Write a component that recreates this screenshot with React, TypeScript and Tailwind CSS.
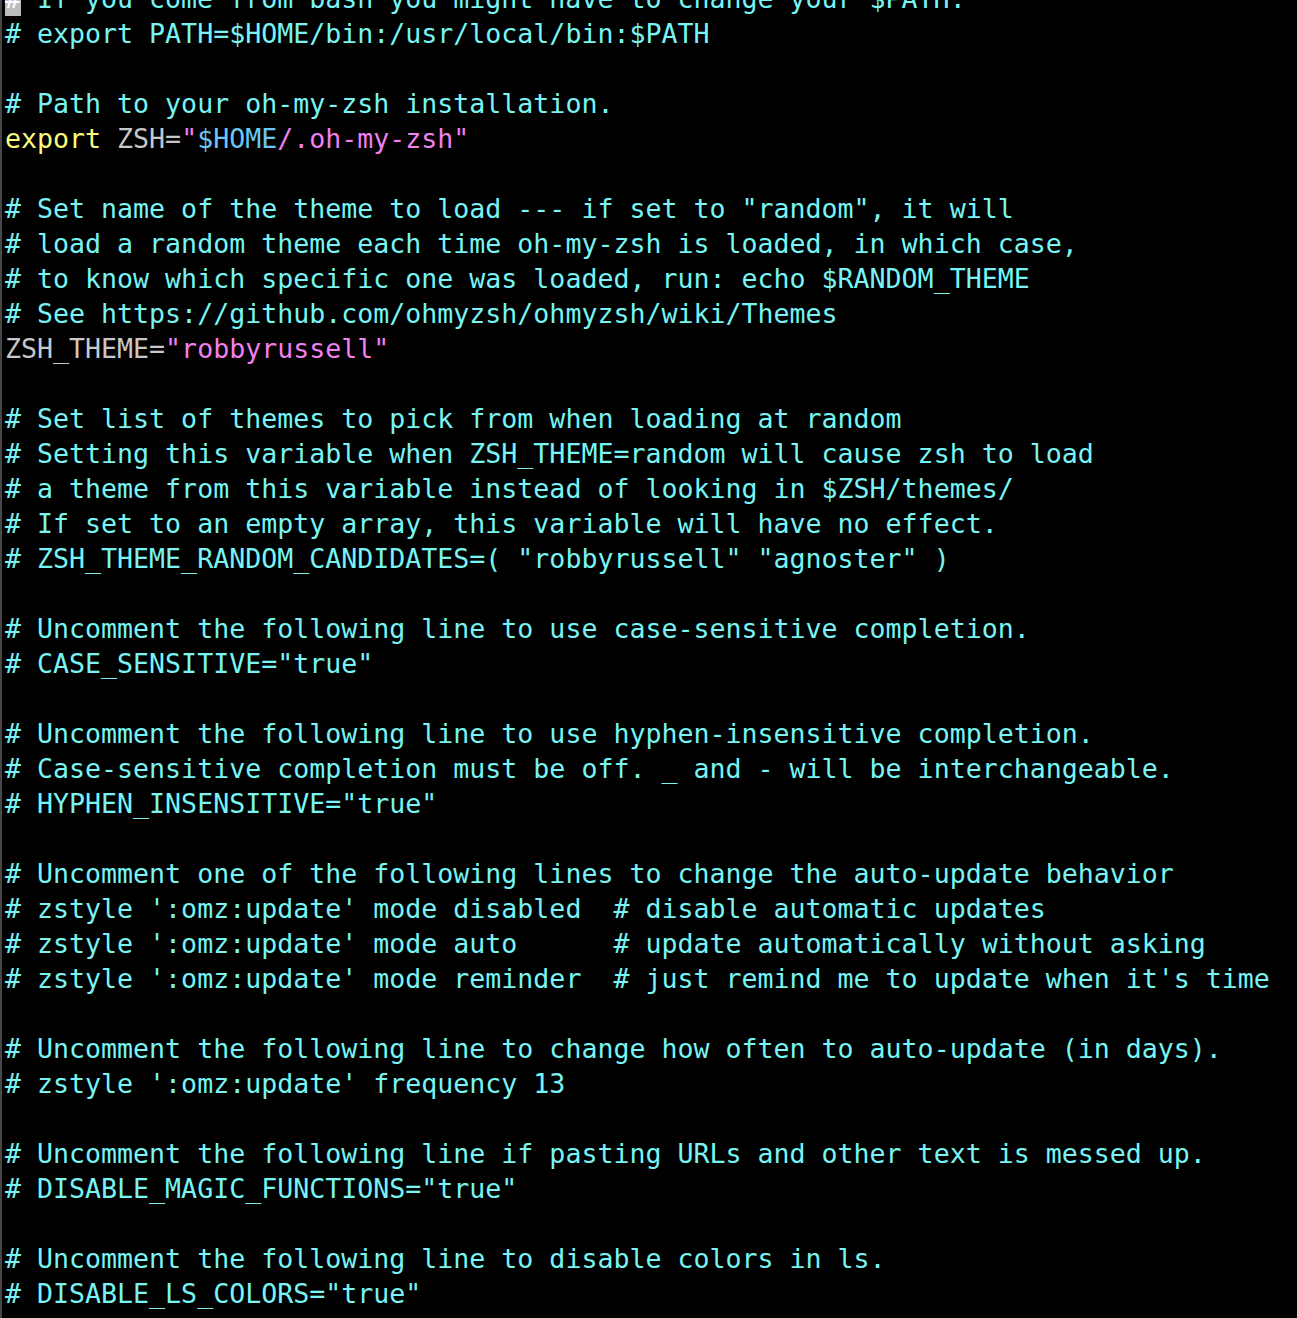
import React from "react";

type Seg = [string, string];

const C = "text-[#78f4f4]";
const Y = "text-[#fdfb7b]";
const G = "text-[#c8c8c8]";
const B = "text-[#6cc5f6]";
const M = "text-[#ef80ee]";

const c = (s: string): Seg[] => [[s, C]];

const lines: Seg[][] = [
  [["#", "cursor"], [" If you come from bash you might have to change your $PATH.", C]],
  c("# export PATH=$HOME/bin:/usr/local/bin:$PATH"),
  [],
  c("# Path to your oh-my-zsh installation."),
  [["export", Y], [" ZSH=", G], ['"', M], ["$HOME", B], ['/.oh-my-zsh"', M]],
  [],
  c('# Set name of the theme to load --- if set to "random", it will'),
  c("# load a random theme each time oh-my-zsh is loaded, in which case,"),
  c("# to know which specific one was loaded, run: echo $RANDOM_THEME"),
  c("# See https://github.com/ohmyzsh/ohmyzsh/wiki/Themes"),
  [["ZSH_THEME=", G], ['"robbyrussell"', M]],
  [],
  c("# Set list of themes to pick from when loading at random"),
  c("# Setting this variable when ZSH_THEME=random will cause zsh to load"),
  c("# a theme from this variable instead of looking in $ZSH/themes/"),
  c("# If set to an empty array, this variable will have no effect."),
  c('# ZSH_THEME_RANDOM_CANDIDATES=( "robbyrussell" "agnoster" )'),
  [],
  c("# Uncomment the following line to use case-sensitive completion."),
  c('# CASE_SENSITIVE="true"'),
  [],
  c("# Uncomment the following line to use hyphen-insensitive completion."),
  c("# Case-sensitive completion must be off. _ and - will be interchangeable."),
  c('# HYPHEN_INSENSITIVE="true"'),
  [],
  c("# Uncomment one of the following lines to change the auto-update behavior"),
  c("# zstyle ':omz:update' mode disabled  # disable automatic updates"),
  c("# zstyle ':omz:update' mode auto      # update automatically without asking"),
  c("# zstyle ':omz:update' mode reminder  # just remind me to update when it's time"),
  [],
  c("# Uncomment the following line to change how often to auto-update (in days)."),
  c("# zstyle ':omz:update' frequency 13"),
  [],
  c("# Uncomment the following line if pasting URLs and other text is messed up."),
  c('# DISABLE_MAGIC_FUNCTIONS="true"'),
  [],
  c("# Uncomment the following line to disable colors in ls."),
  c('# DISABLE_LS_COLORS="true"'),
];

export default function App() {
  return (
    <div className="w-[1297px] h-[1318px] overflow-hidden bg-black border-l-2 border-[#474747]">
      <div
        className="mt-[-19.5px] pl-[3px] text-[26.6px] leading-[35px] whitespace-pre"
        style={{ fontFamily: '"DejaVu Sans Mono", monospace' }}
      >
        {lines.map((segs, i) => (
          <div key={i} className="h-[35px]">
            {segs.map(([t, cls], j) =>
              cls === "cursor" ? (
                <span key={j} className="inline-block bg-[#bdbdbd] text-[#ffffff] w-[16px]">
                  {t}
                </span>
              ) : (
                <span key={j} className={cls}>
                  {t}
                </span>
              )
            )}
          </div>
        ))}
      </div>
    </div>
  );
}
